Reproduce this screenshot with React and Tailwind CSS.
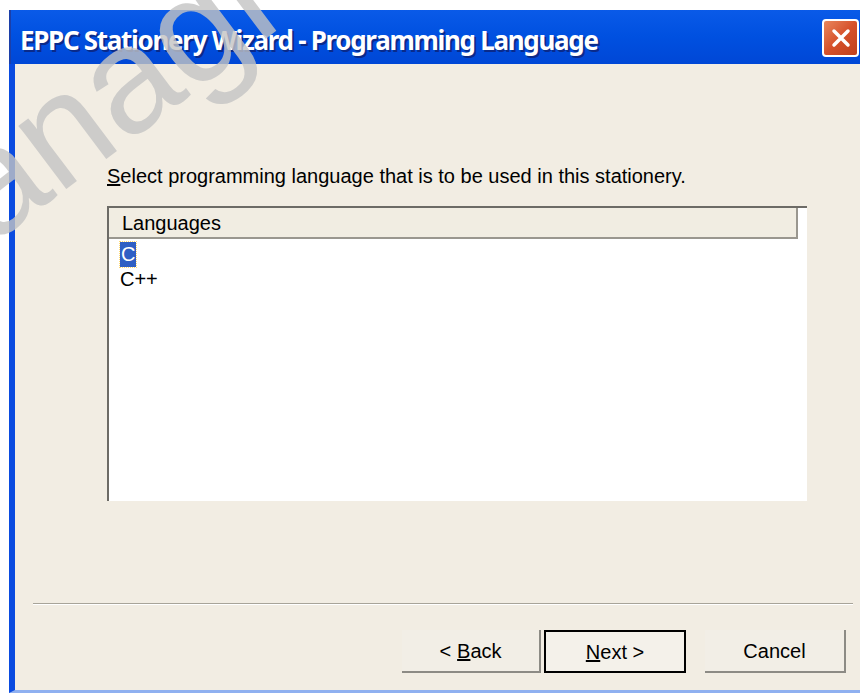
import React from "react";

const ui = { fontFamily: '"Liberation Sans", Arial, sans-serif' };
const titleFont = { fontFamily: '"Noto Sans", "DejaVu Sans", sans-serif' };

const Button = ({ children, isDefault, width }) => (
  <button
    className={
      "h-[43px] text-[20px] text-black flex items-center justify-center " +
      width +
      (isDefault
        ? " border-2 border-black bg-[#f4f1ea]"
        : " border-b-2 border-r-2 border-[#8d8b85] bg-[#f2eee6]")
    }
    style={ui}
  >
    {children}
  </button>
);

const App = () => {
  return (
    <div className="relative w-[860px] h-[693px] bg-white overflow-hidden">
      <div className="ml-[9px] mt-[10px] w-[851px] h-[683px] flex flex-col">
        {/* Title bar */}
        <div className="h-[54px] flex items-center justify-between bg-gradient-to-b from-[#0a5ae8] via-[#0050e0] to-[#0047d6] border-l-2 border-[#1c3fa8]">
          <span
            className="ml-[9px] pt-[7px] text-[26px] font-bold text-white tracking-[-1.3px] [text-shadow:2px_2px_0_#0a2a8a]"
            style={titleFont}
          >
            EPPC Stationery Wizard - Programming Language
          </span>
          <div className="mr-[1px] mt-[2px] w-[37px] h-[38px] rounded-[4px] border-2 border-white bg-gradient-to-br from-[#e8865c] via-[#d6502a] to-[#c0401c] flex items-center justify-center">
            <svg width="24" height="24" viewBox="0 0 24 24">
              <path d="M5 5 L19 19 M19 5 L5 19" stroke="white" strokeWidth="3.5" strokeLinecap="round" />
            </svg>
          </div>
        </div>

        {/* Dialog body */}
        <div className="flex-1 flex flex-col bg-[#f2ede3] border-l-[6px] border-[#0a4be0] border-b-[3px] border-b-[#8fb0f0]">
          <div className="pl-[92px] pr-[53px] pt-[99px]">
            <p className="text-[20px] text-black leading-[26px]" style={ui}>
              <span className="underline">S</span>elect programming language that is to be used in this stationery.
            </p>

            {/* Language list */}
            <div className="mt-[17px] h-[295px] bg-white border-t-2 border-l-2 border-[#6d6b66] flex flex-col">
              <div className="h-[31px] mr-[9px] flex items-center pl-[13px] bg-[#f1ede2] border-b-2 border-r-2 border-[#9a978f] text-[20px] text-black" style={ui}>
                Languages
              </div>
              <div className="pl-[11px] pt-[3px] flex flex-col items-start text-[20px] leading-[25px]" style={ui}>
                <span className="px-[1px] bg-[#2f5fc4] text-white outline-1 outline-dotted outline-[#ffd870]">C</span>
                <span className="text-black">C++</span>
              </div>
            </div>
          </div>

          {/* Separator */}
          <div className="mt-[102px] ml-[18px] mr-[7px] border-t border-[#a8a499] border-b border-b-white" />

          {/* Buttons */}
          <div className="mt-[25px] flex justify-end pr-[14px]">
            <Button width="w-[139px]">
              &lt; <span className="underline ml-[6px]">B</span>ack
            </Button>
            <div className="w-[3px]" />
            <Button isDefault width="w-[142px]">
              <span className="underline">N</span>ext &gt;
            </Button>
            <div className="w-[19px]" />
            <Button width="w-[141px]">Cancel</Button>
          </div>
        </div>
      </div>

      {/* Diagonal watermark */}
      <div
        className="absolute left-[-40px] top-[129px] text-[150px] leading-none text-[#c4c4c4] opacity-80 -rotate-[37deg] origin-left pointer-events-none select-none"
        style={ui}
      >
        anagi
      </div>
    </div>
  );
};

export default App;
